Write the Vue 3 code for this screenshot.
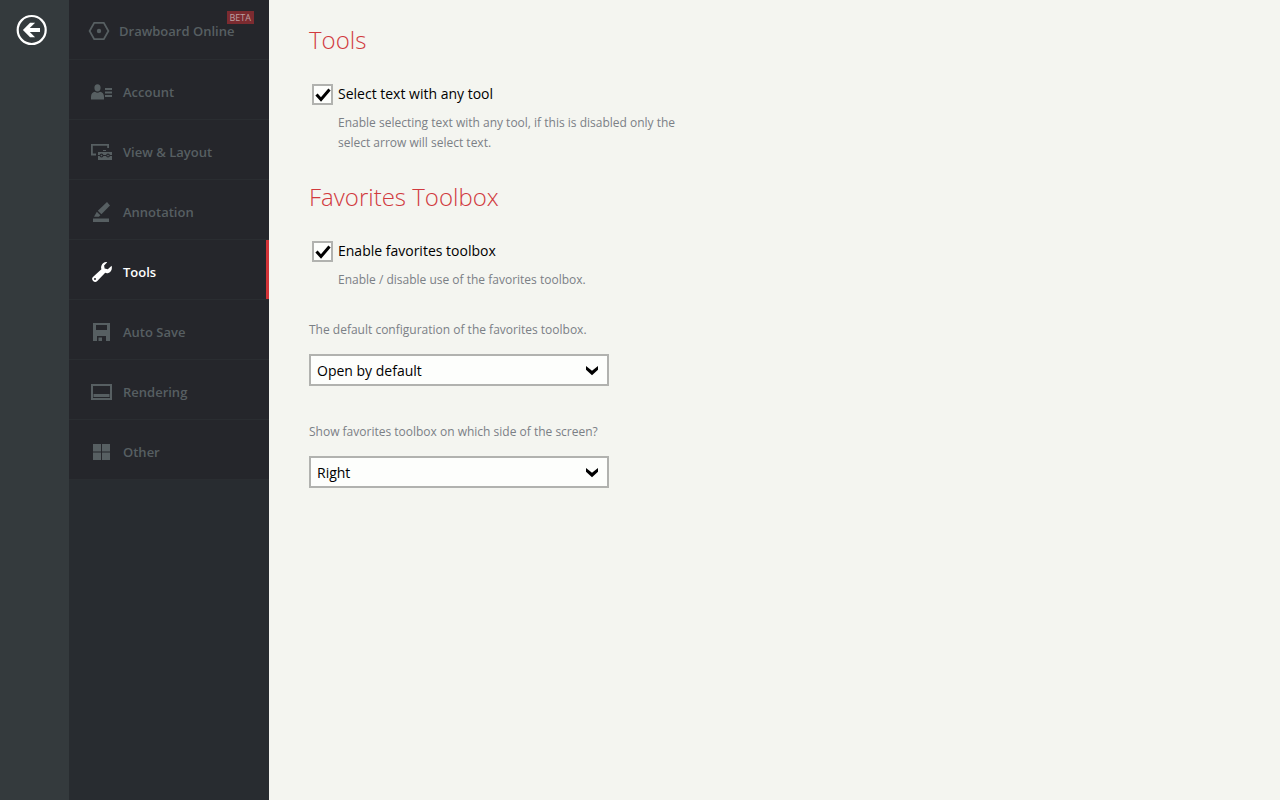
<template>
  <div class="settings">
    <div class="rail">
      <button class="back" type="button" aria-label="Back">
        <svg viewBox="0 0 32 32" width="32" height="32">
          <circle cx="15.7" cy="16" r="14" fill="none" stroke="#fff" stroke-width="2.2" />
          <path d="M6.9 16l7.2-7.2h5l-5.3 5.3H24v3.8H13.8l5.3 5.3h-5z" fill="#fff" />
        </svg>
      </button>
    </div>

    <nav class="menu">
      <a
        v-for="item in items"
        :key="item.id"
        href="#"
        class="menu-item"
        :class="{ 'menu-item--active': item.id === active, 'menu-item--brand': item.badge }"
        @click.prevent="active = item.id"
      >
        <svg class="menu-icon" viewBox="0 0 22 22" width="22" height="22">
          <template v-if="item.id === 'online'">
            <path d="M6.2 2.8h9.6l4.6 8.2-4.6 8.2H6.2L1.6 11z" fill="none" stroke="currentColor" stroke-width="1.8" />
            <circle cx="11" cy="11" r="2.2" />
          </template>
          <template v-else-if="item.id === 'account'">
            <ellipse cx="7.5" cy="6.8" rx="3.1" ry="3.6" />
            <path d="M1 18.5v-2.7c0-2.8 1.6-4.6 4-5 1.6 1.2 3.4 1.2 5 0 2.4.4 4 2.2 4 5v2.7z" />
            <path d="M15 7h7v2h-7zM15 10.5h7v2h-7zM15 14h7v2h-7z" />
          </template>
          <template v-else-if="item.id === 'view'">
            <path d="M1 3h18v4h-1.8V4.8H2.8v7.6H6v2H1z" />
            <path d="M13 9h3v1h-3zM8 11h14v8H8z" />
            <path d="M8 14.5h2M13 14.5h3M20 14.5h2" class="cut-line" />
            <circle cx="11.5" cy="14.5" r="1.4" class="cut-line" />
            <circle cx="18" cy="14.5" r="1.4" class="cut-line" />
          </template>
          <template v-else-if="item.id === 'annotation'">
            <path d="M17 1l3 3.4-8.6 8.8L7.8 9.8z" />
            <path d="M6.8 10.8l3.6 3.4-1.6 1.6H4z" />
            <path d="M3 17.5h16V21H3z" />
          </template>
          <template v-else-if="item.id === 'tools'">
            <path d="M17.2 1.2l-3.1 3.3.5 3.1 3.2.6 3.8-3.5c.9 3.2-.4 6.3-3.2 7.2-1.1.4-2.2.3-3.2-.1l-7.9 8.1a2.9 2.9 0 0 1-4.2 0 2.8 2.8 0 0 1 .1-4.1l8.2-7.6c-.5-1.2-.4-2.5.1-3.7 1-2.5 3.2-3.8 5.7-3.3zM5 16.9a1 1 0 1 0 0 2 1 1 0 0 0 0-2z" fill-rule="evenodd" />
          </template>
          <template v-else-if="item.id === 'save'">
            <path d="M3 2h17v18h-4v-5H7v5H3zM6 4v5h11V4z" fill-rule="evenodd" />
            <path d="M8.5 16.5h3.5V20H8.5z" />
          </template>
          <template v-else-if="item.id === 'rendering'">
            <path d="M1 3h21v16H1zM3 5v12h17V5zM3.5 13h16v3h-16z" fill-rule="evenodd" />
          </template>
          <template v-else>
            <path d="M3 3h8v7.4H3zM12 3h8v7.4h-8zM3 11.6h8V19H3zM12 11.6h8V19h-8z" />
          </template>
        </svg>
        <span>{{ item.label }}</span>
        <span v-if="item.badge" class="badge">{{ item.badge }}</span>
      </a>
    </nav>

    <main class="content">
      <h1>Tools</h1>
      <div class="option">
        <span class="check">
          <input id="select-text" v-model="selectText" type="checkbox" aria-describedby="select-text-hint" />
          <svg v-if="selectText" viewBox="0 0 21 21" width="21" height="21">
            <path d="M4.5 10.5l4.5 5 8.5-10" />
          </svg>
        </span>
        <label for="select-text">Select text with any tool</label>
      </div>
      <p id="select-text-hint" class="hint">
        Enable selecting text with any tool, if this is disabled only the select arrow will select text.
      </p>

      <h1>Favorites Toolbox</h1>
      <div class="option">
        <span class="check">
          <input id="favorites" v-model="favorites" type="checkbox" aria-describedby="favorites-hint" />
          <svg v-if="favorites" viewBox="0 0 21 21" width="21" height="21">
            <path d="M4.5 10.5l4.5 5 8.5-10" />
          </svg>
        </span>
        <label for="favorites">Enable favorites toolbox</label>
      </div>
      <p id="favorites-hint" class="hint">Enable / disable use of the favorites toolbox.</p>

      <div class="fields">
        <div v-for="field in fields" :key="field.id" class="field">
          <label :for="field.id">{{ field.label }}</label>
          <div class="select">
            <select :id="field.id" v-model="field.value">
              <option v-for="option in field.options" :key="option">{{ option }}</option>
            </select>
            <svg viewBox="0 0 14 12" width="14" height="12">
              <path d="M1 2l6 4.8L13 2v3.8l-6 5.4-6-5.4z" />
            </svg>
          </div>
        </div>
      </div>
    </main>
  </div>
</template>

<script setup>
import { ref, reactive } from 'vue';

const items = [
  { id: 'online', label: 'Drawboard Online', badge: 'BETA' },
  { id: 'account', label: 'Account' },
  { id: 'view', label: 'View & Layout' },
  { id: 'annotation', label: 'Annotation' },
  { id: 'tools', label: 'Tools' },
  { id: 'save', label: 'Auto Save' },
  { id: 'rendering', label: 'Rendering' },
  { id: 'other', label: 'Other' }
];

const active = ref('tools');
const selectText = ref(true);
const favorites = ref(true);

const fields = reactive([
  {
    id: 'default-state',
    label: 'The default configuration of the favorites toolbox.',
    value: 'Open by default',
    options: ['Open by default', 'Closed by default']
  },
  {
    id: 'side',
    label: 'Show favorites toolbox on which side of the screen?',
    value: 'Right',
    options: ['Left', 'Right']
  }
]);
</script>

<style>
body {
  margin: 0;
  background: #f4f5f0;
}
</style>

<style scoped>
.settings {
  display: flex;
  min-height: 100vh;
  font-family: 'Open Sans', 'Noto Sans', sans-serif;
  color: #000;
}

.rail {
  flex: none;
  width: 69px;
  box-sizing: border-box;
  padding: 14px 16px;
  background: #343a3d;
}

.back {
  display: block;
  padding: 0;
  border: 0;
  background: none;
  cursor: pointer;
}

.back svg {
  display: block;
}

/* Side menu */
.menu {
  flex: none;
  width: 200px;
  background: #282c30;
}

.menu-item {
  position: relative;
  display: flex;
  align-items: center;
  gap: 11px;
  height: 60px;
  box-sizing: border-box;
  padding: 5px 21px 0;
  border-bottom: 1px solid #2a2d31;
  background: #25262b;
  color: #575f62;
  font-size: 13px;
  font-weight: 600;
  text-decoration: none;
  white-space: nowrap;
}

.menu-item--brand {
  gap: 9px;
  padding-top: 3px;
  padding-left: 19px;
}

.menu-item--active {
  color: #fff;
}

.menu-item--active::after {
  content: '';
  position: absolute;
  top: 0;
  right: 0;
  width: 3px;
  height: 100%;
  background: #d33438;
}

.menu-icon {
  flex: none;
  fill: currentColor;
}

.cut-line {
  fill: none;
  stroke: #25262b;
  stroke-width: 1.1;
}

.badge {
  position: absolute;
  top: 11px;
  right: 15px;
  padding: 0 3px;
  background: #7c2b30;
  color: #bda0a2;
  font-size: 9px;
  font-weight: 400;
  line-height: 13px;
}

/* Content */
.content {
  flex: 1;
  padding: 22px 40px;
}

h1 {
  margin: 0 0 24px;
  color: #d13a3e;
  font-size: 24px;
  font-weight: 300;
  line-height: 36px;
}

.option {
  display: flex;
  align-items: center;
  gap: 5px;
  padding-left: 3px;
  font-size: 14px;
  line-height: 24px;
}

.check {
  display: grid;
}

.check > * {
  grid-area: 1 / 1;
}

.check input {
  appearance: none;
  width: 21px;
  height: 21px;
  margin: 0;
  border: 2px solid #b1b2af;
  background: #fdfefc;
}

.check svg {
  fill: none;
  stroke: #000;
  stroke-width: 3;
  pointer-events: none;
}

.hint {
  max-width: 350px;
  margin: 7px 0 26px 29px;
  color: #7b8086;
  font-size: 12px;
  line-height: 20px;
}

.fields {
  padding-top: 4px;
}

.field {
  margin-bottom: 36px;
}

.field label {
  display: block;
  margin-bottom: 14px;
  color: #7b8086;
  font-size: 12px;
  line-height: 20px;
}

.select {
  display: grid;
  align-items: center;
  max-width: 300px;
}

.select > * {
  grid-area: 1 / 1;
}

.select select {
  appearance: none;
  width: 100%;
  height: 32px;
  padding: 0 32px 0 6px;
  border: 2px solid #b1b2af;
  border-radius: 0;
  background: #fdfefc;
  color: #000;
  font-family: inherit;
  font-size: 14px;
}

.select svg {
  justify-self: end;
  margin-right: 10px;
  pointer-events: none;
}
</style>
